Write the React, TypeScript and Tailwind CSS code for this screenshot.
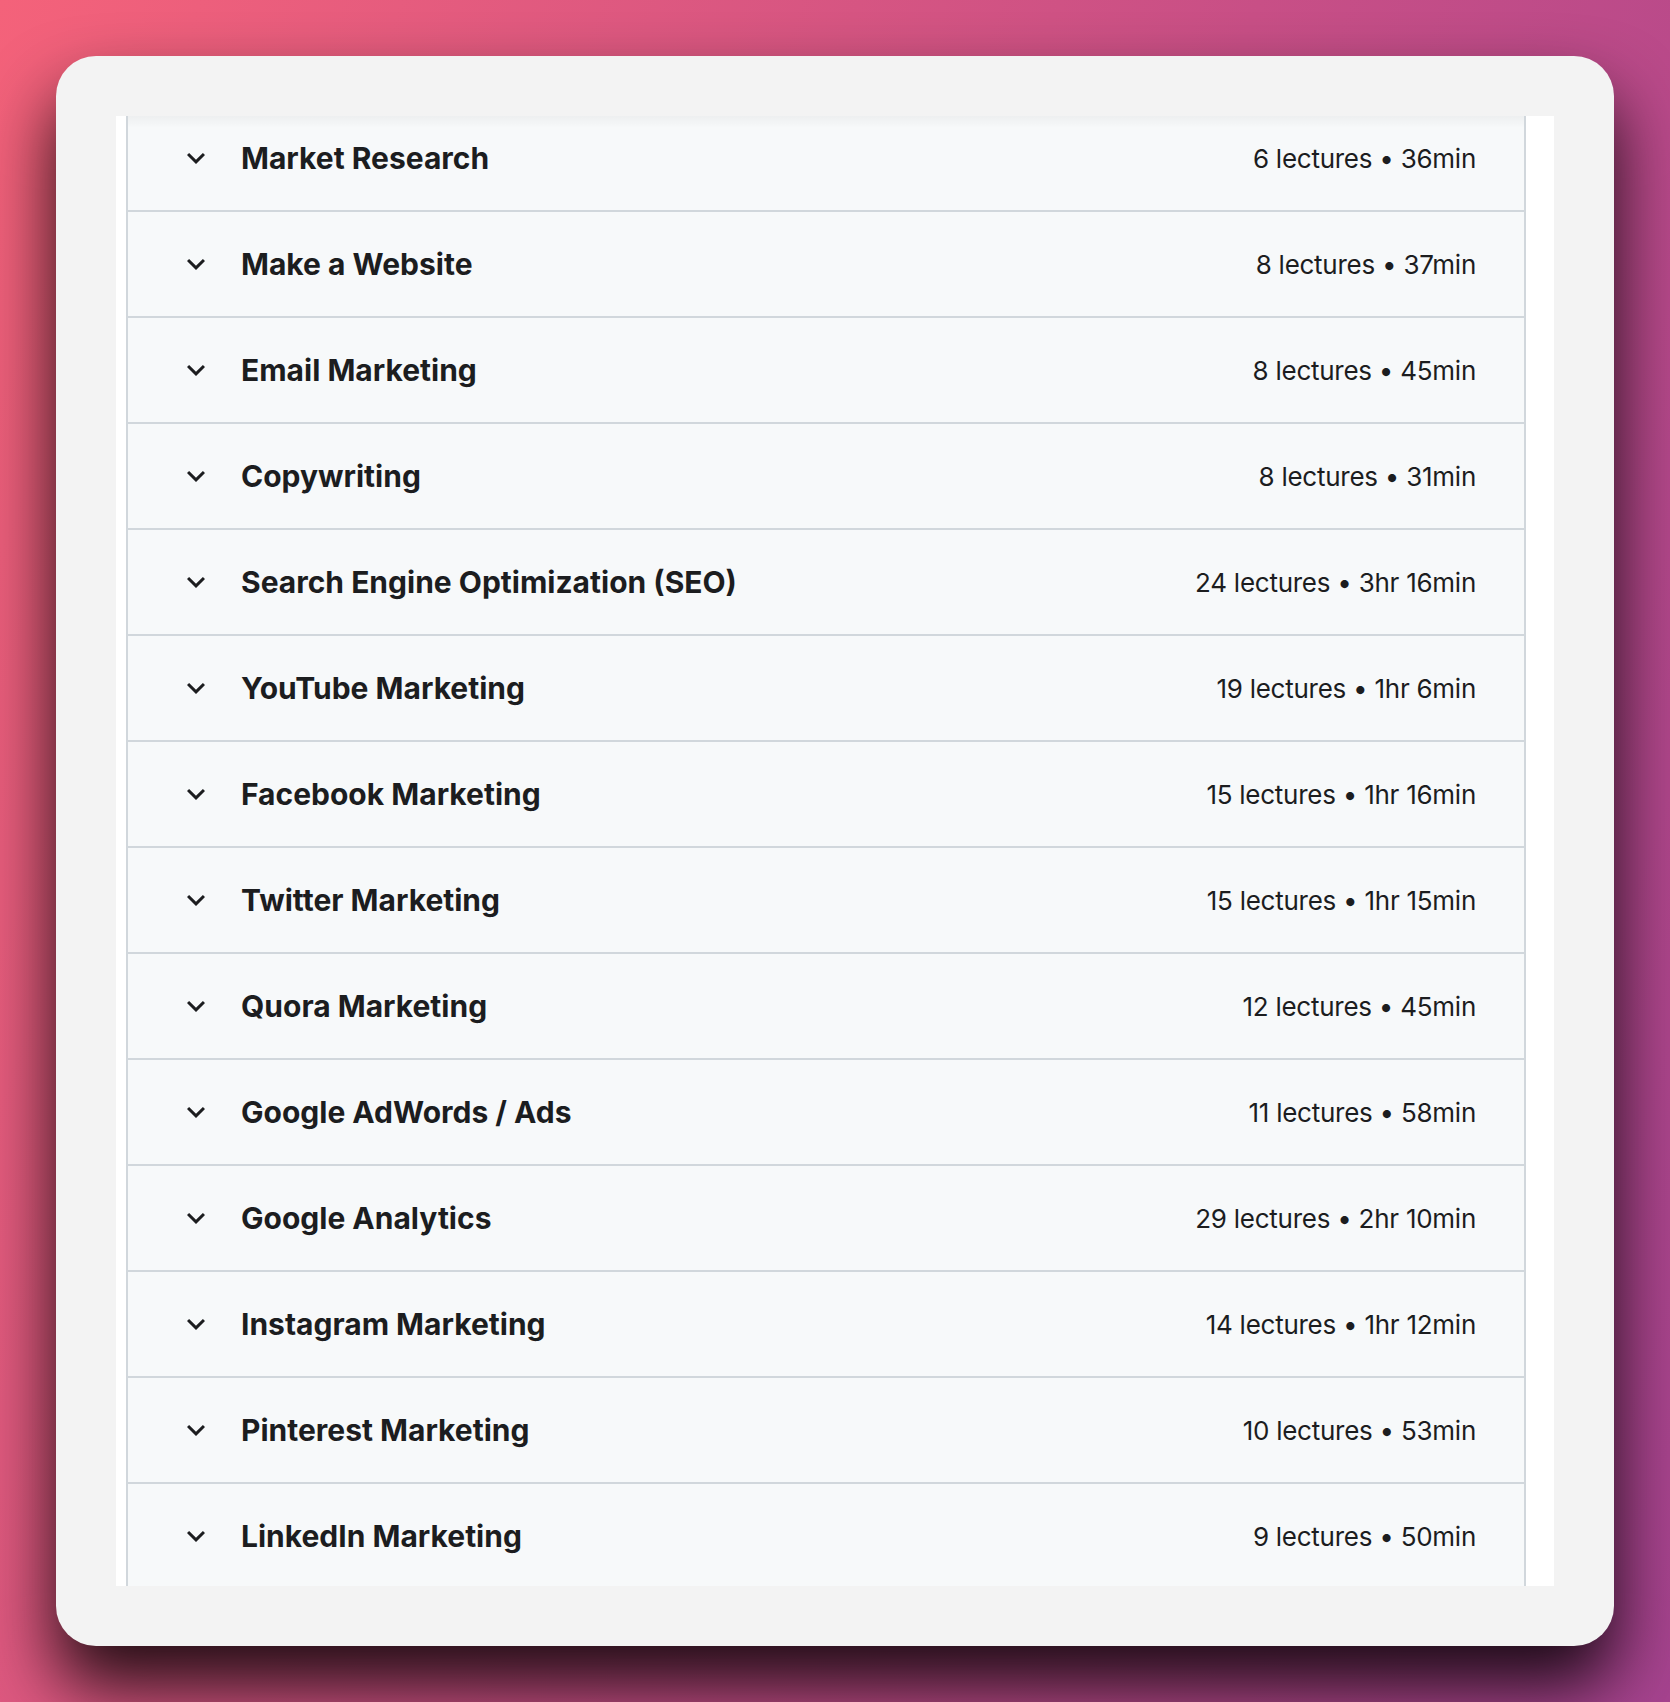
import { useLayoutEffect, useRef } from "react";

const sections = [
  { title: "Market Research", meta: "6 lectures • 36min" },
  { title: "Make a Website", meta: "8 lectures • 37min" },
  { title: "Email Marketing", meta: "8 lectures • 45min" },
  { title: "Copywriting", meta: "8 lectures • 31min" },
  { title: "Search Engine Optimization (SEO)", meta: "24 lectures • 3hr 16min" },
  { title: "YouTube Marketing", meta: "19 lectures • 1hr 6min" },
  { title: "Facebook Marketing", meta: "15 lectures • 1hr 16min" },
  { title: "Twitter Marketing", meta: "15 lectures • 1hr 15min" },
  { title: "Quora Marketing", meta: "12 lectures • 45min" },
  { title: "Google AdWords / Ads", meta: "11 lectures • 58min" },
  { title: "Google Analytics", meta: "29 lectures • 2hr 10min" },
  { title: "Instagram Marketing", meta: "14 lectures • 1hr 12min" },
  { title: "Pinterest Marketing", meta: "10 lectures • 53min" },
  { title: "LinkedIn Marketing", meta: "9 lectures • 50min" },
];

function ExpandMore() {
  return (
    <svg viewBox="0 0 24 24" className="w-[36px] h-[36px] shrink-0" fill="#1c1d1f">
      <path d="M16.59 8.59 12 13.17 7.41 8.59 6 10l6 6 6-6z" />
    </svg>
  );
}

export default function App() {
  const scroller = useRef<HTMLDivElement>(null);

  // the list in the shot is scrolled a touch past its top
  useLayoutEffect(() => {
    if (scroller.current) scroller.current.scrollTop = 10;
  }, []);

  return (
    <div className="w-full h-[1702px] p-14 bg-[linear-gradient(110deg,#f4627a_0%,#c84f86_55%,#a6438f_100%)] font-['Inter',sans-serif]">
      <div className="w-full h-full rounded-[40px] bg-[#f3f3f3] p-[60px] shadow-[0_40px_70px_rgba(0,0,0,0.85)]">
        <div className="relative w-full h-full bg-white pl-[10px] pr-[28px]">
          <div ref={scroller} className="h-full overflow-hidden border-x-2 border-[#d1d7dc]">
            {sections.map((s) => (
              <div
                key={s.title}
                className="h-[106px] flex items-center justify-between bg-[#f7f9fa] border-b-2 border-[#d1d7dc] pl-[50px] pr-[48px]"
              >
                <div className="flex items-center gap-[27px]">
                  <ExpandMore />
                  <span className="text-[30px] font-bold text-[#1c1d1f]">{s.title}</span>
                </div>
                <span className="text-[26px] tracking-[-0.01em] text-[#1c1d1f]">{s.meta}</span>
              </div>
            ))}
            <div className="h-[106px] bg-[#f7f9fa]" />
          </div>
          {/* soft shade under the clipped top edge */}
          <div className="absolute top-0 left-[12px] right-[30px] h-[12px] bg-gradient-to-b from-black/[0.04] to-transparent pointer-events-none" />
        </div>
      </div>
    </div>
  );
}
